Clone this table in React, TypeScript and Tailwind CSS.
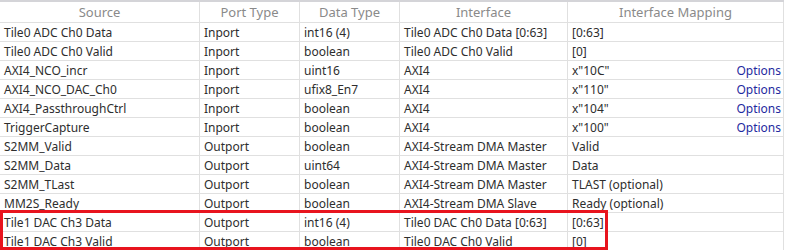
import React from 'react';

type Row = {
  source: string;
  port: string;
  dtype: string;
  iface: string;
  mapping: string;
  options?: boolean;
};

const ROWS: Row[] = [
  { source: 'Tile0 ADC Ch0 Data', port: 'Inport', dtype: 'int16 (4)', iface: 'Tile0 ADC Ch0 Data [0:63]', mapping: '[0:63]' },
  { source: 'Tile0 ADC Ch0 Valid', port: 'Inport', dtype: 'boolean', iface: 'Tile0 ADC Ch0 Valid', mapping: '[0]' },
  { source: 'AXI4_NCO_incr', port: 'Inport', dtype: 'uint16', iface: 'AXI4', mapping: 'x"10C"', options: true },
  { source: 'AXI4_NCO_DAC_Ch0', port: 'Inport', dtype: 'ufix8_En7', iface: 'AXI4', mapping: 'x"110"', options: true },
  { source: 'AXI4_PassthroughCtrl', port: 'Inport', dtype: 'boolean', iface: 'AXI4', mapping: 'x"104"', options: true },
  { source: 'TriggerCapture', port: 'Inport', dtype: 'boolean', iface: 'AXI4', mapping: 'x"100"', options: true },
  { source: 'S2MM_Valid', port: 'Outport', dtype: 'boolean', iface: 'AXI4-Stream DMA Master', mapping: 'Valid' },
  { source: 'S2MM_Data', port: 'Outport', dtype: 'uint64', iface: 'AXI4-Stream DMA Master', mapping: 'Data' },
  { source: 'S2MM_TLast', port: 'Outport', dtype: 'boolean', iface: 'AXI4-Stream DMA Master', mapping: 'TLAST (optional)' },
  { source: 'MM2S_Ready', port: 'Outport', dtype: 'boolean', iface: 'AXI4-Stream DMA Slave', mapping: 'Ready (optional)' },
  { source: 'Tile1 DAC Ch3 Data', port: 'Outport', dtype: 'int16 (4)', iface: 'Tile0 DAC Ch0 Data [0:63]', mapping: '[0:63]' },
  { source: 'Tile1 DAC Ch3 Valid', port: 'Outport', dtype: 'boolean', iface: 'Tile0 DAC Ch0 Valid', mapping: '[0]' },
];

const HEADERS = ['Source', 'Port Type', 'Data Type', 'Interface', 'Interface Mapping'];

const cell = 'border-r border-b border-[#e0e0e0] pl-[4px] pr-[2px] pt-[1px] h-[19px] flex items-center whitespace-nowrap overflow-hidden';

export default function App() {
  return (
    <div
      className="relative w-[788px] h-[250px] overflow-hidden bg-white text-[12px] text-[#2e2e2e]"
      style={{ fontFamily: '"Noto Sans", "Open Sans", sans-serif' }}
    >
      <div className="border-t-2 border-[#d4d4d8] w-[784px] grid grid-cols-[200px_100px_100px_168px_216px]">
        {HEADERS.map(h => (
          <div
            key={h}
            className="border-r border-b border-[#e0e0e0] h-[21px] pt-[2px] flex items-center justify-center text-[13px] text-[#8a8a8a]"
          >
            {h}
          </div>
        ))}

        {ROWS.map(r => (
          <React.Fragment key={r.source}>
            <div className={cell}>{r.source}</div>
            <div className={cell}>{r.port}</div>
            <div className={cell}>{r.dtype}</div>
            <div className={cell}>{r.iface}</div>
            <div className={`${cell} justify-between`}>
              <span>{r.mapping}</span>
              {r.options && <span className="text-[#1f2aa0]">Options</span>}
            </div>
          </React.Fragment>
        ))}
      </div>

      {/* highlight box */}
      <div className="absolute left-0 top-[210px] w-[608px] h-[40px] border-[3px] border-[#e8141e] pointer-events-none" />
    </div>
  );
}
